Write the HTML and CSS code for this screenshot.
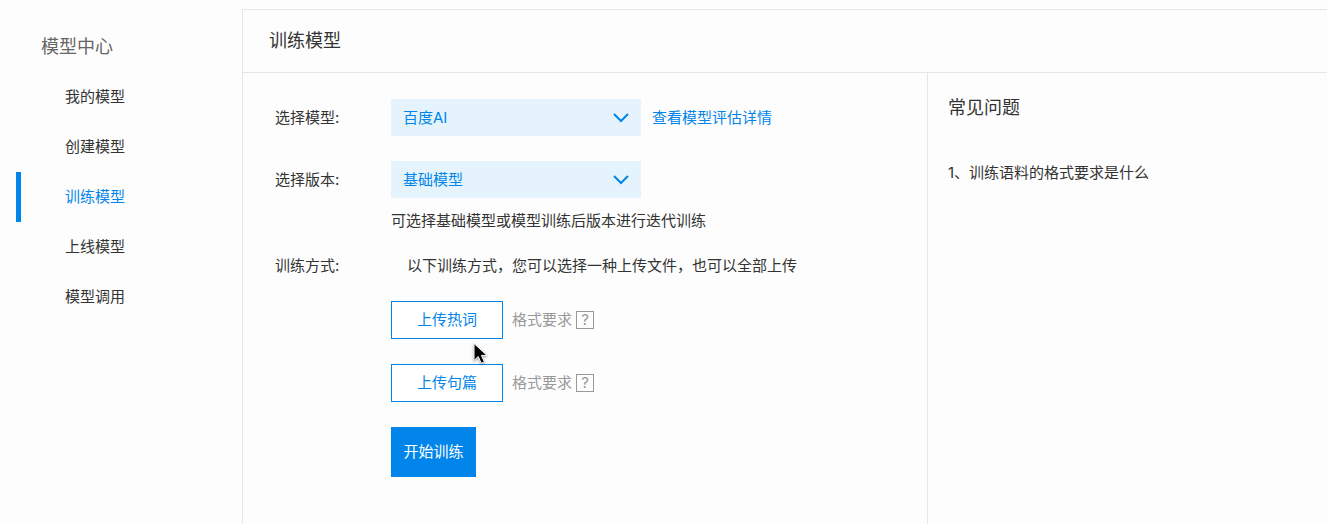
FILE: index.html
```html
<!DOCTYPE html>
<html lang="zh-CN">
<head>
  <meta charset="UTF-8">
  <meta name="viewport" content="width=device-width, initial-scale=1.0">
  <title>训练模型</title>
  <link rel="stylesheet" href="styles.css">
</head>
<body>
  <div class="layout">
    <nav class="sidebar">
      <h2 class="sidebar-title">模型中心</h2>
      <ul class="menu">
        <li><a class="menu-link" href="#">我的模型</a></li>
        <li><a class="menu-link" href="#">创建模型</a></li>
        <li><a class="menu-link active" href="#">训练模型</a></li>
        <li><a class="menu-link" href="#">上线模型</a></li>
        <li><a class="menu-link" href="#">模型调用</a></li>
      </ul>
    </nav>

    <main class="main">
      <h1 class="main-title">训练模型</h1>
      <div class="content">
        <form class="form">
          <div class="row">
            <label class="label" for="model">选择模型:</label>
            <div class="select-box">
              <select class="select" id="model">
                <option>百度AI</option>
              </select>
              <svg class="arrow" width="16" height="10" viewBox="0 0 16 10"><path d="M1 1l7 7 7-7"/></svg>
            </div>
            <a class="link" href="#">查看模型评估详情</a>
          </div>

          <div class="row">
            <label class="label" for="version">选择版本:</label>
            <div class="select-box">
              <select class="select" id="version">
                <option>基础模型</option>
              </select>
              <svg class="arrow" width="16" height="10" viewBox="0 0 16 10"><path d="M1 1l7 7 7-7"/></svg>
            </div>
          </div>
          <p class="hint">可选择基础模型或模型训练后版本进行迭代训练</p>

          <div class="way">
            <span class="label">训练方式:</span>
            <p class="way-text">以下训练方式，您可以选择一种上传文件，也可以全部上传</p>
          </div>

          <div class="actions">
            <div class="upload">
              <button type="button" class="btn-upload">上传热词</button>
              <button type="button" class="tip">格式要求<span class="mark">?</span></button>
              <svg class="cursor" width="18" height="24" viewBox="0 0 18 24"><path d="M2 1.500v17l4.200-4 3 6.800 3.200-1.400-3-6.500h5.600z"/></svg>
            </div>
            <div class="upload">
              <button type="button" class="btn-upload">上传句篇</button>
              <button type="button" class="tip">格式要求<span class="mark">?</span></button>
            </div>
            <button type="button" class="btn-start">开始训练</button>
          </div>
        </form>

        <aside class="faq">
          <h2 class="faq-title">常见问题</h2>
          <a class="faq-link" href="#">1、训练语料的格式要求是什么</a>
        </aside>
      </div>
    </main>
  </div>
</body>
</html>
```

FILE: styles.css
```css
* {
  margin: 0;
  padding: 0;
  box-sizing: border-box;
}

body {
  font-family: Inter, "Noto Sans CJK SC", sans-serif;
  font-size: 15px;
  line-height: 24px;
  color: #333;
  background: #fdfdfd;
}

a {
  color: inherit;
  text-decoration: none;
}

button,
select {
  font: inherit;
  cursor: pointer;
}

.layout {
  display: flex;
  min-height: 100vh;
  padding-top: 9px;
}

/* sidebar */
.sidebar {
  flex: none;
  width: 242px;
  padding: 26px 0 0 16px;
}

.sidebar-title {
  padding-left: 25px;
  margin-bottom: 13px;
  font-size: 18px;
  font-weight: normal;
  color: #666;
}

.menu {
  list-style: none;
}

.menu-link {
  display: block;
  padding-left: 44px;
  line-height: 50px;
  border-left: 5px solid transparent;
}

.menu-link.active {
  color: #0185ea;
  border-left-color: #0185ea;
}

/* main */
.main {
  flex: 1;
  display: flex;
  flex-direction: column;
  border-top: 1px solid #e6e6e6;
  border-left: 1px solid #e6e6e6;
}

.main-title {
  padding-left: 26px;
  font-size: 18px;
  font-weight: normal;
  line-height: 62px;
  border-bottom: 1px solid #e6e6e6;
}

.content {
  flex: 1;
  display: flex;
}

.form {
  flex: 1;
  padding: 26px 0 48px 32px;
}

.row {
  display: flex;
  align-items: center;
  margin-bottom: 25px;
}

.label {
  flex: none;
  width: 116px;
}

.select-box {
  position: relative;
  width: 250px;
  margin-right: 11px;
}

.select {
  display: block;
  width: 100%;
  height: 37px;
  padding: 0 40px 0 12px;
  color: #0185ea;
  background: #e5f4fc;
  border: none;
  border-radius: 0;
  appearance: none;
}

.arrow {
  position: absolute;
  top: 14px;
  right: 12px;
  fill: none;
  stroke: #0185ea;
  stroke-width: 2;
  pointer-events: none;
}

.link {
  color: #0185ea;
}

.hint {
  margin: -14px 0 21px 116px;
}

.way {
  display: flex;
  margin-bottom: 23px;
}

.way-text {
  padding-left: 16px;
}

.actions {
  display: flex;
  flex-direction: column;
  align-items: flex-start;
  gap: 25px;
  padding-left: 116px;
}

.upload {
  position: relative;
  display: flex;
  align-items: center;
  gap: 9px;
}

.btn-upload {
  width: 112px;
  height: 38px;
  color: #0185ea;
  background: #fff;
  border: 1px solid #0185ea;
}

.tip {
  display: flex;
  align-items: center;
  gap: 4px;
  color: #999;
  background: none;
  border: none;
}

.mark {
  width: 18px;
  height: 18px;
  line-height: 16px;
  border: 1px solid #999;
}

.cursor {
  position: absolute;
  top: 41px;
  left: 81px;
  z-index: 1;
  fill: #000;
  stroke: #fff;
  filter: drop-shadow(0 1px 1px rgba(0, 0, 0, 0.4));
  pointer-events: none;
}

.btn-start {
  width: 85px;
  height: 50px;
  color: #fff;
  background: #0185ea;
  border: none;
}

/* faq */
.faq {
  flex: none;
  width: 400px;
  padding: 23px 20px;
  border-left: 1px solid #e6e6e6;
}

.faq-title {
  margin-bottom: 41px;
  font-size: 18px;
  font-weight: normal;
}
```
